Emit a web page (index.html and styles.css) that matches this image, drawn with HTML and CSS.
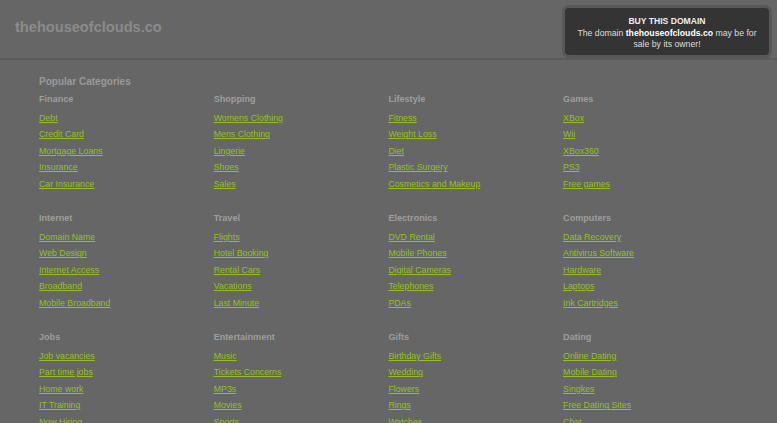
FILE: index.html
```html
<!DOCTYPE html>
<html lang="en">
<head>
    <meta charset="UTF-8">
    <meta name="viewport" content="width=device-width, initial-scale=1.0">
    <title>thehouseofclouds.co</title>
    <link rel="stylesheet" href="styles.css">
</head>
<body>

<!-- Header -->
<header class="header">
    <div class="logo">thehouseofclouds.co</div>
</header>

<!-- Buy box -->
<div class="buy-box">
    <div class="buy-title">BUY THIS DOMAIN</div>
    <p>The domain <b>thehouseofclouds.co</b> may be for sale by its owner!</p>
</div>

<!-- Categories -->
<section class="categories">
    <h2>Popular Categories</h2>
    <div class="grid">
        <div class="cat">
            <h3>Finance</h3>
            <ul>
                <li><a href="#">Debt</a></li>
                <li><a href="#">Credit Card</a></li>
                <li><a href="#">Mortgage Loans</a></li>
                <li><a href="#">Insurance</a></li>
                <li><a href="#">Car Insurance</a></li>
            </ul>
        </div>
        <div class="cat">
            <h3>Shopping</h3>
            <ul>
                <li><a href="#">Womens Clothing</a></li>
                <li><a href="#">Mens Clothing</a></li>
                <li><a href="#">Lingerie</a></li>
                <li><a href="#">Shoes</a></li>
                <li><a href="#">Sales</a></li>
            </ul>
        </div>
        <div class="cat">
            <h3>Lifestyle</h3>
            <ul>
                <li><a href="#">Fitness</a></li>
                <li><a href="#">Weight Loss</a></li>
                <li><a href="#">Diet</a></li>
                <li><a href="#">Plastic Surgery</a></li>
                <li><a href="#">Cosmetics and Makeup</a></li>
            </ul>
        </div>
        <div class="cat">
            <h3>Games</h3>
            <ul>
                <li><a href="#">XBox</a></li>
                <li><a href="#">Wii</a></li>
                <li><a href="#">XBox360</a></li>
                <li><a href="#">PS3</a></li>
                <li><a href="#">Free games</a></li>
            </ul>
        </div>

        <div class="cat">
            <h3>Internet</h3>
            <ul>
                <li><a href="#">Domain Name</a></li>
                <li><a href="#">Web Design</a></li>
                <li><a href="#">Internet Access</a></li>
                <li><a href="#">Broadband</a></li>
                <li><a href="#">Mobile Broadband</a></li>
            </ul>
        </div>
        <div class="cat">
            <h3>Travel</h3>
            <ul>
                <li><a href="#">Flights</a></li>
                <li><a href="#">Hotel Booking</a></li>
                <li><a href="#">Rental Cars</a></li>
                <li><a href="#">Vacations</a></li>
                <li><a href="#">Last Minute</a></li>
            </ul>
        </div>
        <div class="cat">
            <h3>Electronics</h3>
            <ul>
                <li><a href="#">DVD Rental</a></li>
                <li><a href="#">Mobile Phones</a></li>
                <li><a href="#">Digital Cameras</a></li>
                <li><a href="#">Telephones</a></li>
                <li><a href="#">PDAs</a></li>
            </ul>
        </div>
        <div class="cat">
            <h3>Computers</h3>
            <ul>
                <li><a href="#">Data Recovery</a></li>
                <li><a href="#">Antivirus Software</a></li>
                <li><a href="#">Hardware</a></li>
                <li><a href="#">Laptops</a></li>
                <li><a href="#">Ink Cartridges</a></li>
            </ul>
        </div>

        <div class="cat">
            <h3>Jobs</h3>
            <ul>
                <li><a href="#">Job vacancies</a></li>
                <li><a href="#">Part time jobs</a></li>
                <li><a href="#">Home work</a></li>
                <li><a href="#">IT Training</a></li>
                <li><a href="#">Now Hiring</a></li>
            </ul>
        </div>
        <div class="cat">
            <h3>Entertainment</h3>
            <ul>
                <li><a href="#">Music</a></li>
                <li><a href="#">Tickets Concerns</a></li>
                <li><a href="#">MP3s</a></li>
                <li><a href="#">Movies</a></li>
                <li><a href="#">Sports</a></li>
            </ul>
        </div>
        <div class="cat">
            <h3>Gifts</h3>
            <ul>
                <li><a href="#">Birthday Gifts</a></li>
                <li><a href="#">Wedding</a></li>
                <li><a href="#">Flowers</a></li>
                <li><a href="#">Rings</a></li>
                <li><a href="#">Watches</a></li>
            </ul>
        </div>
        <div class="cat">
            <h3>Dating</h3>
            <ul>
                <li><a href="#">Online Dating</a></li>
                <li><a href="#">Mobile Dating</a></li>
                <li><a href="#">Singkes</a></li>
                <li><a href="#">Free Dating Sites</a></li>
                <li><a href="#">Chat</a></li>
            </ul>
        </div>
    </div>
</section>

</body>
</html>
```

FILE: styles.css
```css
body {
    font-family: 'Liberation Sans', Arial, sans-serif;
    margin: 0;
    padding: 0;
    background-color: #666;
    color: #ddd;
}

.header {
    height: 58px;
    border-bottom: 2px solid #5b5b5b;
    display: flex;
    align-items: center;
    padding: 0 15px;
}

.header .logo {
    font-size: 14.6px;
    font-weight: bold;
    color: #8b8b8b;
    margin-top: -4px;
}

.buy-box {
    position: absolute;
    top: 5px;
    right: 5px;
    width: 184px;
    padding: 7px 10px 5px;
    background-color: #343434;
    border: 3px solid #585858;
    border-radius: 7px;
    text-align: center;
}

.buy-title {
    font-size: 8.6px;
    font-weight: bold;
    color: #eee;
    line-height: 12px;
}

.buy-box p {
    margin: 1px 0 0;
    font-size: 8.7px;
    line-height: 11px;
    color: #ddd;
}

.buy-box p b {
    color: #fff;
}

.categories {
    padding: 15px 0 0 39px;
}

.categories h2 {
    margin: 0 0 4px;
    font-size: 10px;
    line-height: 14px;
    color: #9a9a9a;
}

.grid {
    display: grid;
    grid-template-columns: repeat(4, 174.7px);
}

.cat {
    padding-bottom: 19.75px;
}

.cat h3 {
    margin: 0 0 4.75px;
    font-size: 9.1px;
    line-height: 12px;
    color: #9e9e9e;
}

.cat ul {
    list-style: none;
    margin: 0;
    padding: 0;
}

.cat li {
    line-height: 16.5px;
    font-size: 8.8px;
}

.cat a {
    color: #95c11f;
}
```
